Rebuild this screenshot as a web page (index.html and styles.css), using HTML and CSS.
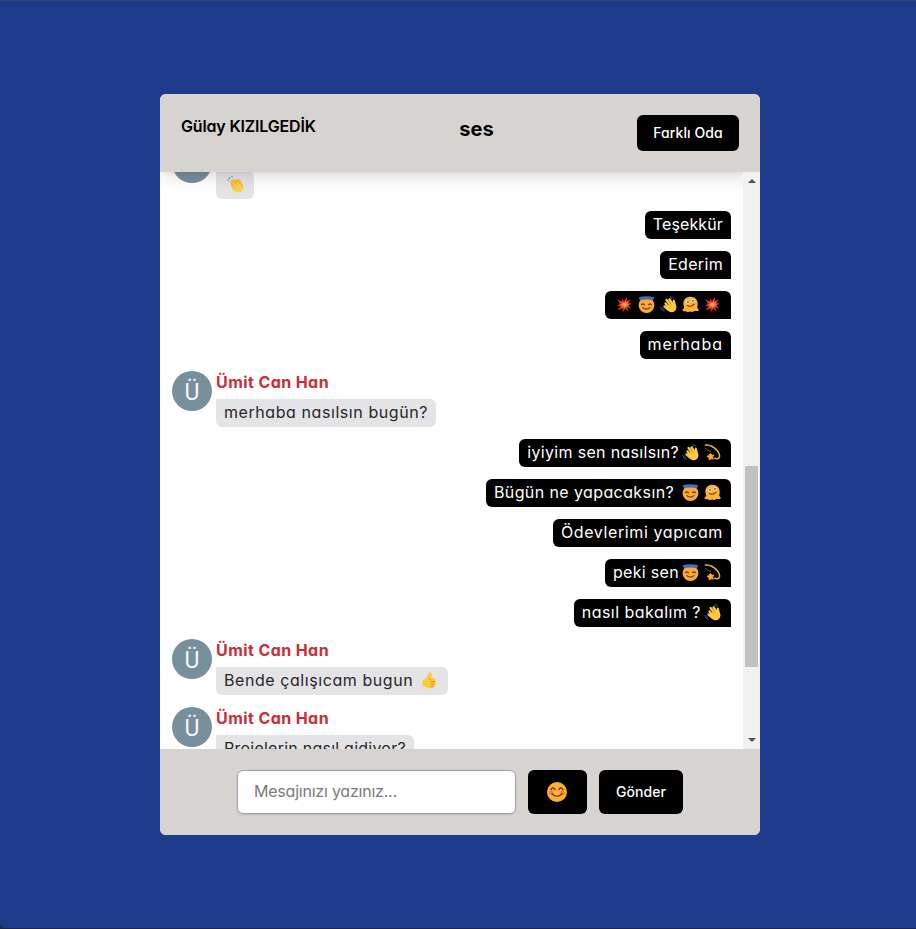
FILE: index.html
```html
<!DOCTYPE html>
<html lang="tr">
<head>
<meta charset="utf-8">
<title>Sohbet</title>
<link rel="stylesheet" href="styles.css">
</head>
<body>
<svg class="sprite" aria-hidden="true">
  <symbol id="boom" viewBox="0 0 16 16">
    <path fill="#e5292d" d="M7.6 5 10.2.8l.1 4 3.6-1.7-2 3.5 2.7.8-2.8 1.4 2.2 2.6-3.4-.5 1.3 3.4-3.3-2.4-1.4 3.2-1.4-3.6-4.2 2.2 2.3-4-3-.7 2.8-1.4L1.3 3l4.2 2.1.2-3z"/>
    <path fill="#ff8b35" d="m8.2 6 .8-1.8.7 2.1 1.9-.7-.9 1.8 1.4.6-1.7 1 .7 1.7-2-.8-1 1.7-.9-1.7-2.3 1 .9-2-1.8-.5 1.7-1-.9-1.8 2 .7z"/>
    <circle cx="8" cy="8" r="1.2" fill="#ffe27a"/>
  </symbol>
  <symbol id="halo" viewBox="0 0 16 16">
    <circle cx="8" cy="8.6" r="7.4" fill="#ffa932"/>
    <path fill="#4569cc" d="M.6 1.2Q8-.8 15.4 1.2L14.2 3.8Q8 2.6 1.8 3.8z"/>
    <path d="M3.4 8.2q1.3-1.7 2.6 0M10 8.2q1.3-1.7 2.6 0M4.6 10.9q3.4 3 6.8 0" fill="none" stroke="#67351e" stroke-width="1.1" stroke-linecap="round"/>
  </symbol>
  <symbol id="wave" viewBox="0 0 16 16">
    <path d="M5.2 7 8.5 12M6.2 3.8l4 5.4M9 3.3l3.3 4.8M4.2 9.8l3 2.5" stroke="#ffc83d" stroke-width="2.2" stroke-linecap="round"/>
    <path fill="#ffc83d" d="M5.5 8.6 11.8 7l.3-3q.2-1 1-.7 1 .5 1.2 2.4l1.1 4.1q.5 3.3-2.3 5.1c-2.8 1.3-5.5-.4-7.8-3.2z"/>
    <path d="M6.7 7.1 9 9.8M8.8 5.9l2.1 2.6" stroke="#e8942f" stroke-width=".4"/>
    <path d="M.6 10.4q.3 3.4 3.6 4M2.4 10.7q.2 1.6 1.8 2.1M9.5.8q2.7-.6 4 1.4M9.5 2.2l1.7.4" fill="none" stroke="#315a9a" stroke-width=".9"/>
  </symbol>
  <symbol id="melt" viewBox="0 0 16 16">
    <path fill="#ffb12f" d="M1.3 7C1.3 3.2 4 .7 8 .7s6.8 2.8 6.8 6.6c0 2.2-.7 3-.3 4 .3.8 1.4.8 1.2 2-.3 1.7-3.3.4-4.3.9-1 .7-1.9 1.2-3 .6-1-.5-1.3-.1-2.4.2-1.4.4-1.7-1-2.8-.7-1.4.4-2.8-.1-2.7-1.3.1-1 1.4-1 1.5-2C2.2 10 1.3 9.2 1.3 7z"/>
    <circle cx="5.5" cy="5.6" r="1.6" fill="#fff"/><circle cx="10.3" cy="4.6" r="1.6" fill="#fff"/>
    <circle cx="5.6" cy="5.6" r=".8" fill="#402a32"/><circle cx="10.3" cy="4.6" r=".8" fill="#402a32"/>
    <path d="M5 9q3.5 1.7 6.4-1.4" fill="none" stroke="#67351e" stroke-linecap="round"/>
  </symbol>
  <symbol id="dizzy" viewBox="0 0 16 16">
    <path d="M1.2.9C6.5.6 10 3.2 12.6 6.4q3.2 4.3 1.5 6.5-1.4 1.5-4 .5" fill="none" stroke="#e9b63c" stroke-width="1.4" stroke-linecap="round"/>
    <path d="M.8 3.7Q3.6 6.4 6.4 7.2" fill="none" stroke="#9b7b2d" stroke-width=".7"/>
    <path fill="#ffa52e" stroke="#ffa52e" stroke-linejoin="round" d="m6.2 9 .9 1.4 2.1.1-1.2 1.7.7 2-2-.5-1.7 1.1-.2-2.1-1.7-1.1 1.8-.9z"/>
  </symbol>
  <symbol id="clap" viewBox="0 0 16 16">
    <path fill="#ffbd3c" d="M3.2 5.1q1-2.4 3.4-1.8l5.2-.2 2.7 3.7q2.2 4.3-.8 7.3-3.6 2.5-7-.4Q2.9 10.2 3.2 5.1z"/>
    <path fill="#ffd04f" d="M5.8 6q1-.9 2 .5l2.3 1.8-.4-2.1q1-1.2 2.3 1.2l2.4 3.1q.6 4-2.5 4.7-2.8.4-5.3-2.3L3.9 9.4q.5-1.2 1.9.2l1 1.1-1.7-2.6z"/>
    <path d="m4.1 7.2 4 4.2M6 5.1l4 4M8.7 4.3l3 2.5" stroke="#e7962c" stroke-width=".6"/>
    <path d="M.5 3.8 2 4.4M1.7 1.4l1.1 1.2M4.5 0l.5 1.5" stroke="#4d9ddd" stroke-width="1.1"/>
  </symbol>
  <symbol id="thumb" viewBox="0 0 16 16">
    <path fill="#ffc83d" d="M1.6 8 5 5.8 7.3 1q1.5-1.5 2.6.3.8 1.5-.2 4.6h3q1.4.3 1 2 .9.9 0 2.1.5 1.2-.5 2 0 1.4-1 1.7-.4 1.2-1.6 1.3-4.9.7-7-1.2l-2-.7z"/>
    <path d="M9.4 6.5q-1.4.2-1.5 1M9 9.1h4.2M9 11.4h3.6M9 13.4h2.6" fill="none" stroke="#d98529" stroke-width=".8"/>
  </symbol>
  <symbol id="smile" viewBox="0 0 20 20">
    <circle cx="10" cy="10" r="10" fill="#ffb02e"/>
    <circle cx="4.3" cy="10.7" r="2.3" fill="#ff7c38"/><circle cx="15.7" cy="10.7" r="2.3" fill="#ff7c38"/>
    <path d="M4 7.6q1.7-3.3 4 0M12 7.6q1.7-3.3 4 0M5.2 11.8q4.8 4.9 9.6 0" fill="none" stroke="#402a32" stroke-width="1.2" stroke-linecap="round"/>
  </symbol>
</svg>

<main class="chat">
  <header class="chat-header">
    <p class="user">Gülay KIZILGEDİK</p>
    <h1 class="room">ses</h1>
    <button class="btn btn-room">Farklı Oda</button>
  </header>

  <section class="chat-body">
    <div class="messages">
      <article class="received">
        <span class="avatar">Ü</span>
        <div><p class="name"></p><p class="bubble"><svg class="emoji"><use href="#clap"/></svg></p></div>
      </article>
      <p class="bubble sent track-1">Teşekkür</p>
      <p class="bubble sent track-3">Ederim</p>
      <p class="bubble sent"><svg class="emoji"><use href="#boom"/></svg><svg class="emoji"><use href="#halo"/></svg><svg class="emoji"><use href="#wave"/></svg><svg class="emoji"><use href="#melt"/></svg><svg class="emoji"><use href="#boom"/></svg></p>
      <p class="bubble sent track-10">merhaba</p>
      <article class="received">
        <span class="avatar">Ü</span>
        <div><p class="name">Ümit Can Han</p><p class="bubble track-6">merhaba nasılsın bugün?</p></div>
      </article>
      <p class="bubble sent track-3">iyiyim sen nasılsın?<svg class="emoji"><use href="#wave"/></svg><svg class="emoji"><use href="#dizzy"/></svg></p>
      <p class="bubble sent track-4">Bügün ne yapacaksın? <svg class="emoji"><use href="#halo"/></svg><svg class="emoji"><use href="#melt"/></svg></p>
      <p class="bubble sent track-7">Ödevlerimi yapıcam</p>
      <p class="bubble sent track-3">peki sen<svg class="emoji"><use href="#halo"/></svg><svg class="emoji"><use href="#dizzy"/></svg></p>
      <p class="bubble sent track-5">nasıl bakalım ?<svg class="emoji"><use href="#wave"/></svg></p>
      <article class="received">
        <span class="avatar">Ü</span>
        <div><p class="name">Ümit Can Han</p><p class="bubble track-6">Bende çalışıcam bugun <svg class="emoji"><use href="#thumb"/></svg></p></div>
      </article>
      <article class="received">
        <span class="avatar">Ü</span>
        <div><p class="name">Ümit Can Han</p><p class="bubble track-2">Projelerin nasıl gidiyor?</p></div>
      </article>
    </div>
    <div class="scrollbar"><i class="arrow up"></i><i class="thumb"></i><i class="arrow down"></i></div>
  </section>

  <form class="chat-form">
    <input class="field" type="text" placeholder="Mesajınızı yazınız...">
    <button class="btn btn-emoji" type="button"><svg width="20" height="20"><use href="#smile"/></svg></button>
    <button class="btn btn-send" type="button">Gönder</button>
  </form>
</main>
</body>
</html>
```
FILE: styles.css
```css
* { box-sizing: border-box; margin: 0; }
html { background: #23283a; }
body {
  height: 928px;
  padding-top: 93px;
  border-top: 1px solid #39436b;
  border-bottom-left-radius: 5px;
  background: #1e3a8a;
  font: 16px/24px Inter, "Open Sans", sans-serif;
  font-feature-settings: "cv11";
  overflow: hidden;
}
.sprite { position: absolute; width: 0; height: 0; }
.chat {
  display: flex;
  flex-direction: column;
  width: 600px;
  height: 741px;
  margin-left: 160px;
  border-radius: 6px;
  overflow: hidden;
  background: #fff;
}
.chat-header {
  position: relative;
  z-index: 1;
  display: flex;
  justify-content: space-between;
  flex: 0 0 78px;
  padding: 21px 21px 0;
  background: #d6d3d1;
  box-shadow: 0 10px 15px -3px rgba(0,0,0,.1), 0 4px 6px -4px rgba(0,0,0,.1);
}
.user { width: 135px; font-weight: 600; line-height: 22px; letter-spacing: -.17px; white-space: nowrap; }
.room { font-size: 20px; line-height: 28px; font-weight: 700; }
.btn {
  display: flex;
  align-items: center;
  justify-content: center;
  padding: 0;
  border: 0;
  border-radius: 6px;
  background: #000;
  color: #fff;
  font: 500 14px/20px Inter, sans-serif;
  font-feature-settings: "cv11";
  letter-spacing: .1px;
}
.btn-room { width: 102px; height: 36px; }
.chat-body { display: flex; flex: 0 0 577px; overflow: hidden; }
.messages {
  display: flex;
  flex-direction: column;
  gap: 12px;
  flex: 1;
  margin-top: -29px;
  padding: 0 12px;
}
.messages > * { flex-shrink: 0; }
.received { display: flex; gap: 4px; }
.avatar {
  width: 40px;
  height: 40px;
  border-radius: 50%;
  background: #78909c;
  color: #f4f7f8;
  font: 400 23px/44px Roboto, sans-serif;
  text-align: center;
}
.name { height: 24px; margin-bottom: 4px; color: #cb2d36; font-weight: 700; line-height: 22px; letter-spacing: .42px; }
.bubble {
  display: flex;
  align-items: center;
  width: max-content;
  height: 28px;
  padding: 0 8px 2px;
  border-radius: 0 6px 6px 6px;
  background: #e4e4e7;
  color: #27272a;
  white-space: pre;
}
.sent {
  align-self: flex-end;
  border-radius: 6px 6px 0 6px;
  background: #000;
  color: #fff;
}
.track-1 { letter-spacing: .12px; }
.track-2 { letter-spacing: .24px; }
.track-3 { letter-spacing: .32px; }
.track-4 { letter-spacing: .4px; }
.track-5 { letter-spacing: .47px; }
.track-6 { letter-spacing: .57px; }
.track-7 { letter-spacing: .62px; }
.track-10 { letter-spacing: 1px; }
.emoji { width: 17px; height: 17px; margin: 1px 2.5px 0; }
.scrollbar {
  position: relative;
  z-index: 2;
  display: flex;
  flex-direction: column;
  align-items: center;
  width: 17px;
  padding: 7px 0;
  background: #f1f1f1;
}
.arrow { border: 4px solid transparent; }
.up { border-top: 0; border-bottom-color: #505050; }
.down { margin-top: auto; border-bottom: 0; border-top-color: #505050; }
.thumb { width: 13px; height: 201px; margin-top: 283px; background: #c1c1c1; }
.chat-form {
  display: flex;
  justify-content: center;
  gap: 12px;
  flex: 0 0 86px;
  padding-top: 21px;
  background: #d6d3d1;
}
.field {
  width: 279px;
  height: 44px;
  padding: 0 16px 2px;
  border: 1px solid #9ca3af;
  border-radius: 6px;
  background: #fff;
  box-shadow: 0 1px 2px rgba(0,0,0,.12);
  font: inherit;
  font-feature-settings: inherit;
  letter-spacing: -.22px;
}
.field::placeholder { color: #7b7b7b; }
.btn-emoji { width: 59px; height: 44px; padding-right: 1px; }
.btn-send { width: 84px; height: 44px; }
```
